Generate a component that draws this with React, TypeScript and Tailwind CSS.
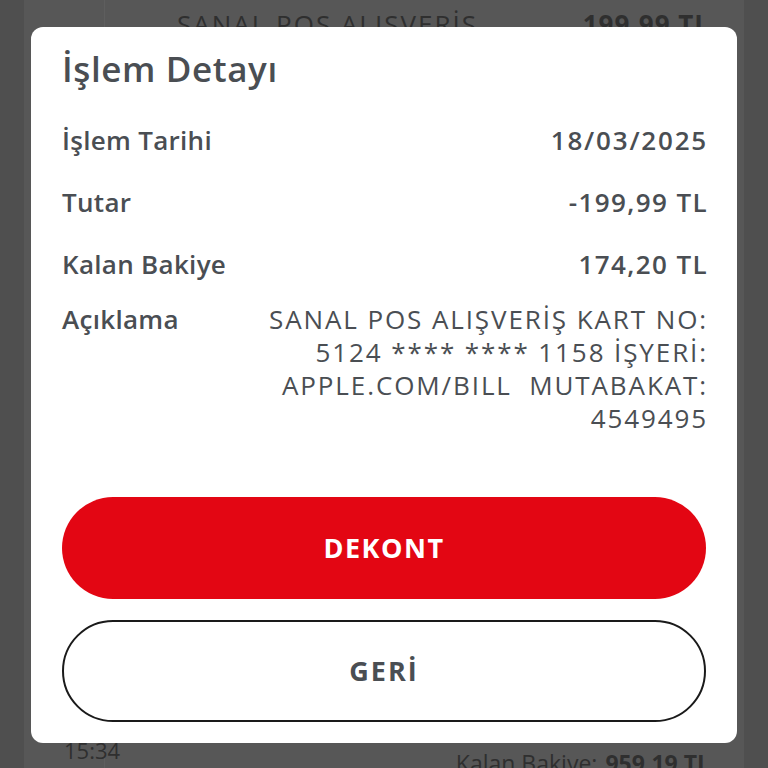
import React from "react";

const rows = [
  { label: "İşlem Tarihi", value: "18/03/2025", track: "tracking-[1.8px]" },
  { label: "Tutar", value: "-199,99 TL", track: "tracking-[1.4px]" },
  { label: "Kalan Bakiye", value: "174,20 TL", track: "tracking-[1.4px]" },
];

const App = () => {
  return (
    <div
      className="relative w-[768px] h-[768px] overflow-hidden bg-[#4f4f4f]"
      style={{ fontFamily: "'Open Sans', Lato, sans-serif" }}
    >
      {/* background list, dimmed */}
      <div className="mx-[24px] h-full bg-[#575757] flex flex-col">
        <div className="flex h-[90px] -mt-[46px]">
          <div className="w-[81px] border-r border-[#5e5e5e]" />
          <div className="flex-1 flex items-end justify-between pl-[72px] pr-[34px] text-[26px] text-[#2f2f2f]">
            <span className="tracking-[2px]">SANAL POS ALIŞVERİŞ</span>
            <span className="font-bold tracking-[1px]">199,99 TL</span>
          </div>
        </div>
        <div className="flex-1" />
        <div className="flex h-[90px] -mb-[56px]">
          <div className="w-[81px] border-r border-[#5e5e5e] pl-[40px] text-[22px] text-[#2f2f2f]">
            15:34
          </div>
          <div className="flex-1 flex justify-end pr-[34px] pt-[12px] text-[23px] text-[#2f2f2f]">
            <span>Kalan Bakiye:</span>
            <span className="font-bold ml-[8px]">959,19 TL</span>
          </div>
        </div>
      </div>

      {/* modal */}
      <div className="absolute left-[31px] top-[27px] w-[706px] h-[716px] bg-white rounded-[12px] px-[31px] pt-[14px] flex flex-col text-[#4a4e53]">
        <h1 className="text-[35px] leading-[56px] font-semibold tracking-[0.6px]">İşlem Detayı</h1>
        <div className="mt-[12px] flex flex-col">
          {rows.map((r) => (
            <div key={r.label} className="flex justify-between items-center h-[62px] text-[26px] font-semibold">
              <span className="tracking-[0.3px]">{r.label}</span>
              <span className={`${r.track} -mr-[2px]`}>{r.value}</span>
            </div>
          ))}
          <div className="flex justify-between items-start text-[26px] mt-[8px]">
            <span className="font-semibold leading-[33px] tracking-[0.3px]">Açıklama</span>
            <span className="text-right leading-[33px] tracking-[1.9px] -mr-[2px]">
              SANAL POS ALIŞVERİŞ KART NO:
              <br />
              5124 **** **** 1158 İŞYERİ:
              <br />
              APPLE.COM/BILL&nbsp; MUTABAKAT:
              <br />
              4549495
            </span>
          </div>
        </div>
        <button className="mt-auto h-[102px] w-full rounded-full bg-[#e30613] text-white text-[27px] font-bold tracking-[1.5px]">
          DEKONT
        </button>
        <button className="mt-[21px] mb-[21px] h-[102px] w-full rounded-full border-2 border-[#1a1a1a] bg-white text-[#4a4e53] text-[27px] font-bold tracking-[2px]">
          GERİ
        </button>
      </div>
    </div>
  );
};

export default App;
